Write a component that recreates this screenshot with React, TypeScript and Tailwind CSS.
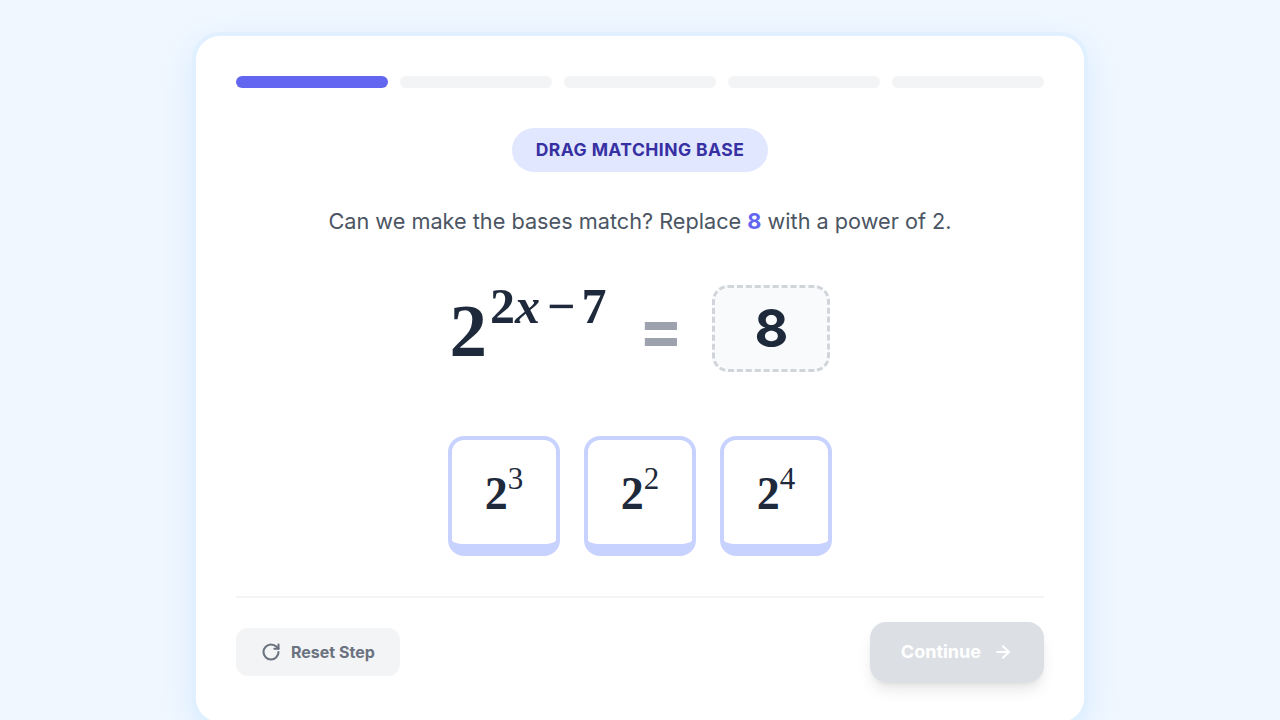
import React from 'react';
import { RotateCw, ArrowRight } from 'lucide-react';

const serif = { fontFamily: '"Liberation Serif", "DejaVu Serif", serif' };

const Tile: React.FC<{ exp: string }> = ({ exp }) => (
  <button className="w-[112px] h-[120px] rounded-2xl border-4 border-b-[12px] border-[#c7d2fe] bg-white flex items-center justify-center">
    <span className="flex items-start font-bold text-[#1e293b] leading-none" style={serif}>
      <span className="text-[46px] leading-none mt-[4px]">2</span>
      <span className="text-[31px] leading-none font-normal -mt-[4px]">{exp}</span>
    </span>
  </button>
);

export default function App() {
  return (
    <div className="min-h-screen bg-[#f0f7ff] pt-8 font-['Inter',sans-serif]">
      <div className="mx-auto w-[896px] bg-white border-4 border-[#e0f0fe] rounded-[28px] shadow-[0_10px_30px_rgba(186,222,255,0.45)] p-10 pb-10">
        <div className="flex gap-3">
          <div className="h-3 flex-1 rounded-full bg-[#6366f1]" />
          <div className="h-3 flex-1 rounded-full bg-[#f3f4f6]" />
          <div className="h-3 flex-1 rounded-full bg-[#f3f4f6]" />
          <div className="h-3 flex-1 rounded-full bg-[#f3f4f6]" />
          <div className="h-3 flex-1 rounded-full bg-[#f3f4f6]" />
        </div>

        <div className="mt-10 flex justify-center">
          <span className="h-11 flex items-center px-6 rounded-full bg-[#e0e7ff] text-[#3730a3] font-bold text-[17.5px] tracking-wide">
            DRAG MATCHING BASE
          </span>
        </div>

        <p className="mt-[34px] text-center text-[21.7px] leading-[30px] text-[#4b5563]">
          Can we make the bases match? Replace <span className="font-bold text-[#6366f1]">8</span> with a power of 2.
        </p>

        <div className="mt-[49px] flex items-center justify-center">
          <div className="flex items-start h-[87px] pt-[2px] text-[#1e293b] font-bold" style={serif}>
            <span className="text-[75px] leading-none mt-[6px]">2</span>
            <span className="flex text-[50px] leading-none -mt-[6px] ml-[3px]">
              2<i className="font-bold mr-[1px]">x</i><span className="mx-[6px]">−</span>7
            </span>
          </div>
          <span className="ml-[32px] mr-[29px] text-[66px] font-bold text-[#9ca3af] leading-none">=</span>
          <div className="w-[118px] h-[87px] shrink-0 rounded-2xl border-[3px] border-dashed border-[#d1d5db] bg-[#f8fafb] flex items-center justify-center">
            <span className="text-[52px] font-bold text-[#1e293b] leading-none">8</span>
          </div>
        </div>

        <div className="mt-16 flex justify-center gap-6">
          <Tile exp="3" />
          <Tile exp="2" />
          <Tile exp="4" />
        </div>

        <div className="mt-10 border-t-2 border-[#f3f4f6]" />

        <div className="mt-6 flex items-center justify-between">
          <button className="flex items-center gap-2.5 h-12 px-[25px] rounded-xl bg-[#f3f4f6] text-[#6b7280] font-bold text-base">
            <RotateCw className="w-5 h-5" strokeWidth={2.5} />
            Reset Step
          </button>
          <button className="flex items-center gap-3 h-[60px] px-[31px] rounded-2xl bg-[#dcdfe4] text-white font-bold text-lg shadow-lg">
            Continue
            <ArrowRight className="w-5 h-5" strokeWidth={2.5} />
          </button>
        </div>
      </div>
    </div>
  );
}
